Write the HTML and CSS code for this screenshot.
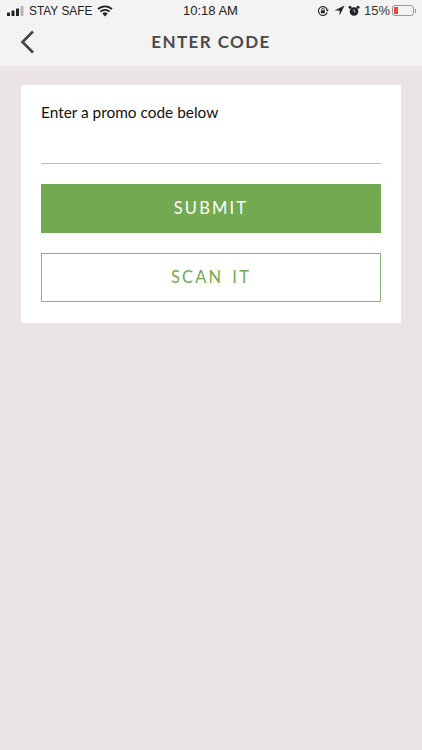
FILE: index.html
```html
<!DOCTYPE html>
<html lang="en">
<head>
<meta charset="utf-8">
<title>Enter Code</title>
<link rel="stylesheet" href="styles.css">
</head>
<body>
<div class="top">
  <div class="status">
    <div class="status-left">
      <svg class="signal" width="17" height="10" viewBox="0 0 17 10"><rect x="0" y="6.5" width="3" height="3.5" rx=".6" fill="#222"/><rect x="4.5" y="4.5" width="3" height="5.5" rx=".6" fill="#222"/><rect x="9" y="2.5" width="3" height="7.5" rx=".6" fill="#222"/><rect x="13.5" y="0" width="3" height="10" rx=".6" fill="#b5b5b5"/></svg>
      <span class="carrier">STAY SAFE</span>
      <svg class="wifi" width="16" height="12" viewBox="0 0 16 12"><path d="M1 4.2a10 10 0 0 1 14 0M3.4 6.7a6.6 6.6 0 0 1 9.2 0" fill="none" stroke="#222" stroke-width="1.8"/><path d="M5.4 8.5a3.6 3.6 0 0 1 5.2 0L8 11.4z" fill="#222"/></svg>
    </div>
    <span class="clock">10:18 AM</span>
    <div class="status-right">
      <svg class="lock" width="12" height="12" viewBox="0 0 12 12"><path d="M10.200 7.500A4.500 4.500 0 1 1 10.200 4.500" fill="none" stroke="#222" stroke-width="1.1"/><path d="M10.300 6.800 11.800 4.600H8.800z" fill="#222"/><rect x="3.900" y="5.200" width="4" height="3" rx=".5" fill="#222"/><path d="M4.800 5.200V4.200a1.200 1.200 0 0 1 2.400 0v1" fill="none" stroke="#222" stroke-width=".8"/></svg>
      <svg class="arrow" width="11" height="11" viewBox="0 0 11 11"><path d="M10.500.5 5.600 10.500V5.400H.5z" fill="#222"/></svg>
      <svg class="alarm" width="12" height="12" viewBox="0 0 12 12"><circle cx="6" cy="6.500" r="4.300" fill="#222"/><circle cx="2" cy="2.200" r="1.500" fill="#222"/><circle cx="10" cy="2.200" r="1.500" fill="#222"/><path d="M6 4v2.700h1.600" fill="none" stroke="#f2f2f2" stroke-width=".7"/></svg>
      <span class="percent">15%</span>
      <div class="battery"><div class="charge"></div></div>
      <div class="nub"></div>
    </div>
  </div>
  <div class="nav">
    <svg class="back" width="16" height="24" viewBox="0 0 16 24"><path d="M14 1.500 3.500 12 14 22.500" fill="none" stroke="#444" stroke-width="2.600"/></svg>
    <h1 class="title">ENTER CODE</h1>
  </div>
</div>
<main class="content">
  <section class="card">
    <label class="prompt" for="code">Enter a promo code below</label>
    <input class="code-input" id="code" type="text">
    <button class="btn btn-solid" type="button">SUBMIT</button>
    <button class="btn btn-outline" type="button">SCAN IT</button>
  </section>
</main>
</body>
</html>
```
FILE: styles.css
```css
* { box-sizing: border-box; }
html, body { margin: 0; height: 100%; }
body {
  width: 422px;
  height: 750px;
  overflow: hidden;
  background: #eae4e4;
  font-family: Lato, sans-serif;
  display: flex;
  flex-direction: column;
}
.top { background: #f3f3f3; height: 66px; flex: none; }
.status {
  height: 21px;
  padding: 0 6px 0 7px;
  position: relative;
  display: flex;
  align-items: center;
  justify-content: space-between;
  font-family: "Liberation Sans", Arial, sans-serif;
  font-size: 13px;
  color: #222;
}
.status-left, .status-right { display: flex; align-items: center; }
.carrier { margin-left: 5px; font-size: 11.9px; }
.wifi { margin-left: 5px; }
.clock { position: absolute; left: 183px; top: 3px; font-size: 13px; }
.status-right .lock { margin-right: 5px; }
.status-right .arrow { margin-right: 3px; }
.status-right .alarm { margin-right: 4px; }
.percent { margin-right: 2px; font-size: 13px; color: #333; }
.battery {
  width: 22px;
  height: 11px;
  border: 1px solid #999;
  border-radius: 3px;
  padding: 1px;
}
.charge { width: 4px; height: 100%; background: #e8453c; }
.nub { width: 1px; height: 4px; background: #999; margin-left: 1px; }
.nav {
  height: 45px;
  padding-bottom: 4px;
  position: relative;
  display: flex;
  align-items: center;
  justify-content: center;
}
.back { position: absolute; left: 19px; top: 9px; }
.title {
  margin: 0;
  font-size: 17px;
  font-weight: 700;
  letter-spacing: 1.4px;
  color: #4a4a4a;
}
.content { padding: 19px 21px; }
.card {
  background: #fff;
  height: 238px;
  padding: 17px 20px 0;
  display: flex;
  flex-direction: column;
}
.prompt {
  font-size: 15.4px;
  line-height: 20px;
  color: #111;
}
.code-input {
  display: block;
  width: 100%;
  height: 42px;
  border: 0;
  border-bottom: 1px solid #bdbdbd;
  outline: 0;
  background: transparent;
  margin-bottom: 20px;
}
.btn {
  display: block;
  width: 100%;
  height: 49px;
  font-family: Lato, sans-serif;
  font-size: 16.5px;
  letter-spacing: 2.2px;
  word-spacing: 2.5px;
  border-radius: 0;
  padding: 0 0 1px;
  text-align: center;
}
.btn-solid { background: #73a951; border: 0; color: #fff; margin-bottom: 20px; }
.btn-outline { background: #fff; border: 1px solid #8fb57a; color: #73a951; }
```
